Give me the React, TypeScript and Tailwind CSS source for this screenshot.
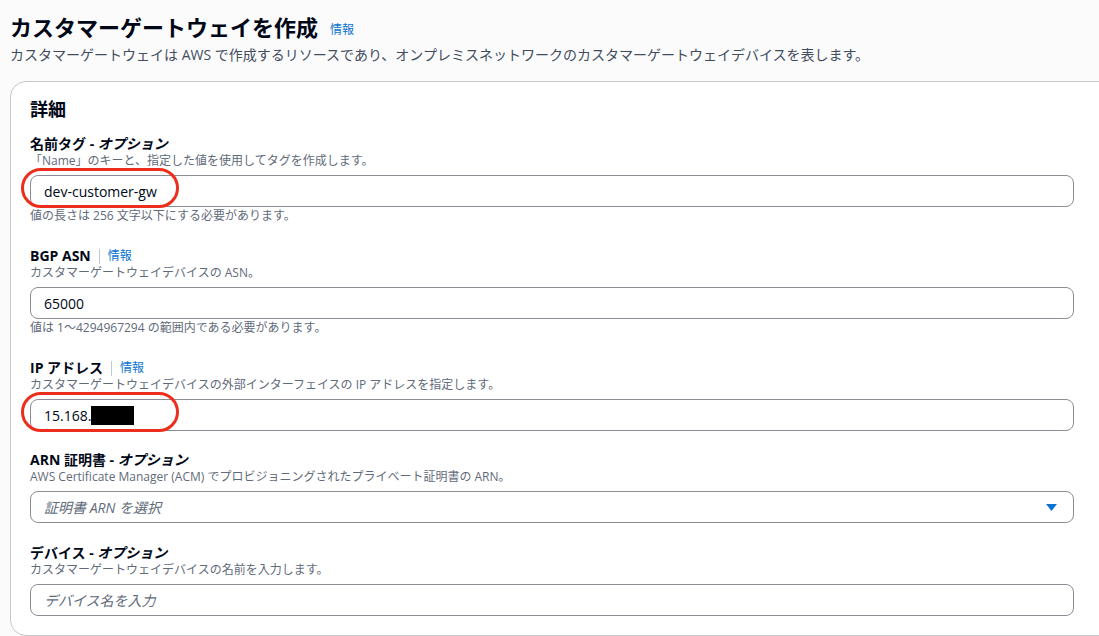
import type { JSX, ReactNode } from 'react'

const font = { fontFamily: '"Open Sans", "Noto Sans CJK JP", sans-serif' }

function InfoLink({ className = '' }: { className?: string }): JSX.Element {
  return <span className={`text-[12px] font-normal text-[#0972d3] ${className}`}>情報</span>
}

interface FieldProps {
  label: ReactNode
  info?: boolean
  desc: string
  constraint?: string
  children: ReactNode
}

function Field({ label, info, desc, constraint, children }: FieldProps): JSX.Element {
  return (
    <div className="flex flex-col">
      <div className="flex h-[18px] items-center text-[14px] font-bold leading-[18px] text-[#000716]">
        <span>{label}</span>
        {info && (
          <>
            <span className="mx-[8px] h-[15px] w-px bg-[#c6c6cd]" />
            <InfoLink />
          </>
        )}
      </div>
      <p className="text-[12px] leading-[16px] text-[#5f6b7a]">{desc}</p>
      <div className="mt-[6px]">{children}</div>
      {constraint && (
        <p className="mt-[1px] text-[12px] leading-[16px] text-[#5f6b7a]">{constraint}</p>
      )}
    </div>
  )
}

function Input({ children, ring }: { children: ReactNode; ring?: boolean }): JSX.Element {
  return (
    <div className="relative flex h-[32px] items-center rounded-[8px] border border-[#8c8c94] bg-white pl-[13px] pr-[12px] text-[14px] text-[#000716]">
      {children}
      {ring && (
        <span className="absolute left-[-10px] top-[-8px] h-[40px] w-[158px] rounded-full border-[3px] border-[#ee2e1c]" />
      )}
    </div>
  )
}

export default function App(): JSX.Element {
  return (
    <div className="h-[636px] w-[1099px] overflow-hidden bg-[#fbfbfc]" style={font}>
      <div className="px-[10px] pt-[12px]">
        <div className="flex items-end gap-[12px]">
          <h1 className="text-[22px] font-bold leading-[30px] text-[#000716]">カスタマーゲートウェイを作成</h1>
          <InfoLink className="mb-[3px]" />
        </div>
        <p className="mt-[3px] text-[14px] leading-[20px] text-[#414d5c]">
          カスタマーゲートウェイは AWS で作成するリソースであり、オンプレミスネットワークのカスタマーゲートウェイデバイスを表します。
        </p>
      </div>

      <div className="ml-[10px] mt-[16px] w-[1110px] rounded-[16px] border border-[#c6c6cd] bg-white pb-[19px] pl-[19px] pr-[45px] pt-[15px]">
        <h2 className="text-[18px] font-bold leading-[24px] text-[#000716]">詳細</h2>

        <div className="mt-[14px] flex flex-col">
          <Field
            label={<>名前タグ - <i>オプション</i></>}
            desc="「Name」のキーと、指定した値を使用してタグを作成します。"
            constraint="値の長さは 256 文字以下にする必要があります。"
          >
            <Input ring>dev-customer-gw</Input>
          </Field>

          <div className="h-[23px]" />

          <Field
            label="BGP ASN"
            info
            desc="カスタマーゲートウェイデバイスの ASN。"
            constraint="値は 1〜4294967294 の範囲内である必要があります。"
          >
            <Input>65000</Input>
          </Field>

          <div className="h-[23px]" />

          <Field
            label="IP アドレス"
            info
            desc="カスタマーゲートウェイデバイスの外部インターフェイスの IP アドレスを指定します。"
          >
            <Input ring>
              15.168.
              <span className="inline-block h-[19px] w-[43px] bg-black" />
            </Input>
          </Field>

          <div className="h-[20px]" />

          <Field
            label={<>ARN 証明書 - <i>オプション</i></>}
            desc="AWS Certificate Manager (ACM) でプロビジョニングされたプライベート証明書の ARN。"
          >
            <Input>
              <span className="flex-1 italic text-[#5f6b7a]">証明書 ARN を選択</span>
              <svg width="11" height="7" viewBox="0 0 11 7" className="mr-[4px]">
                <path d="M0 0H11L5.5 7Z" fill="#0972d3" />
              </svg>
            </Input>
          </Field>

          <div className="h-[21px]" />

          <Field
            label={<>デバイス - <i>オプション</i></>}
            desc="カスタマーゲートウェイデバイスの名前を入力します。"
          >
            <Input>
              <span className="italic text-[#5f6b7a]">デバイス名を入力</span>
            </Input>
          </Field>
        </div>
      </div>
    </div>
  )
}
